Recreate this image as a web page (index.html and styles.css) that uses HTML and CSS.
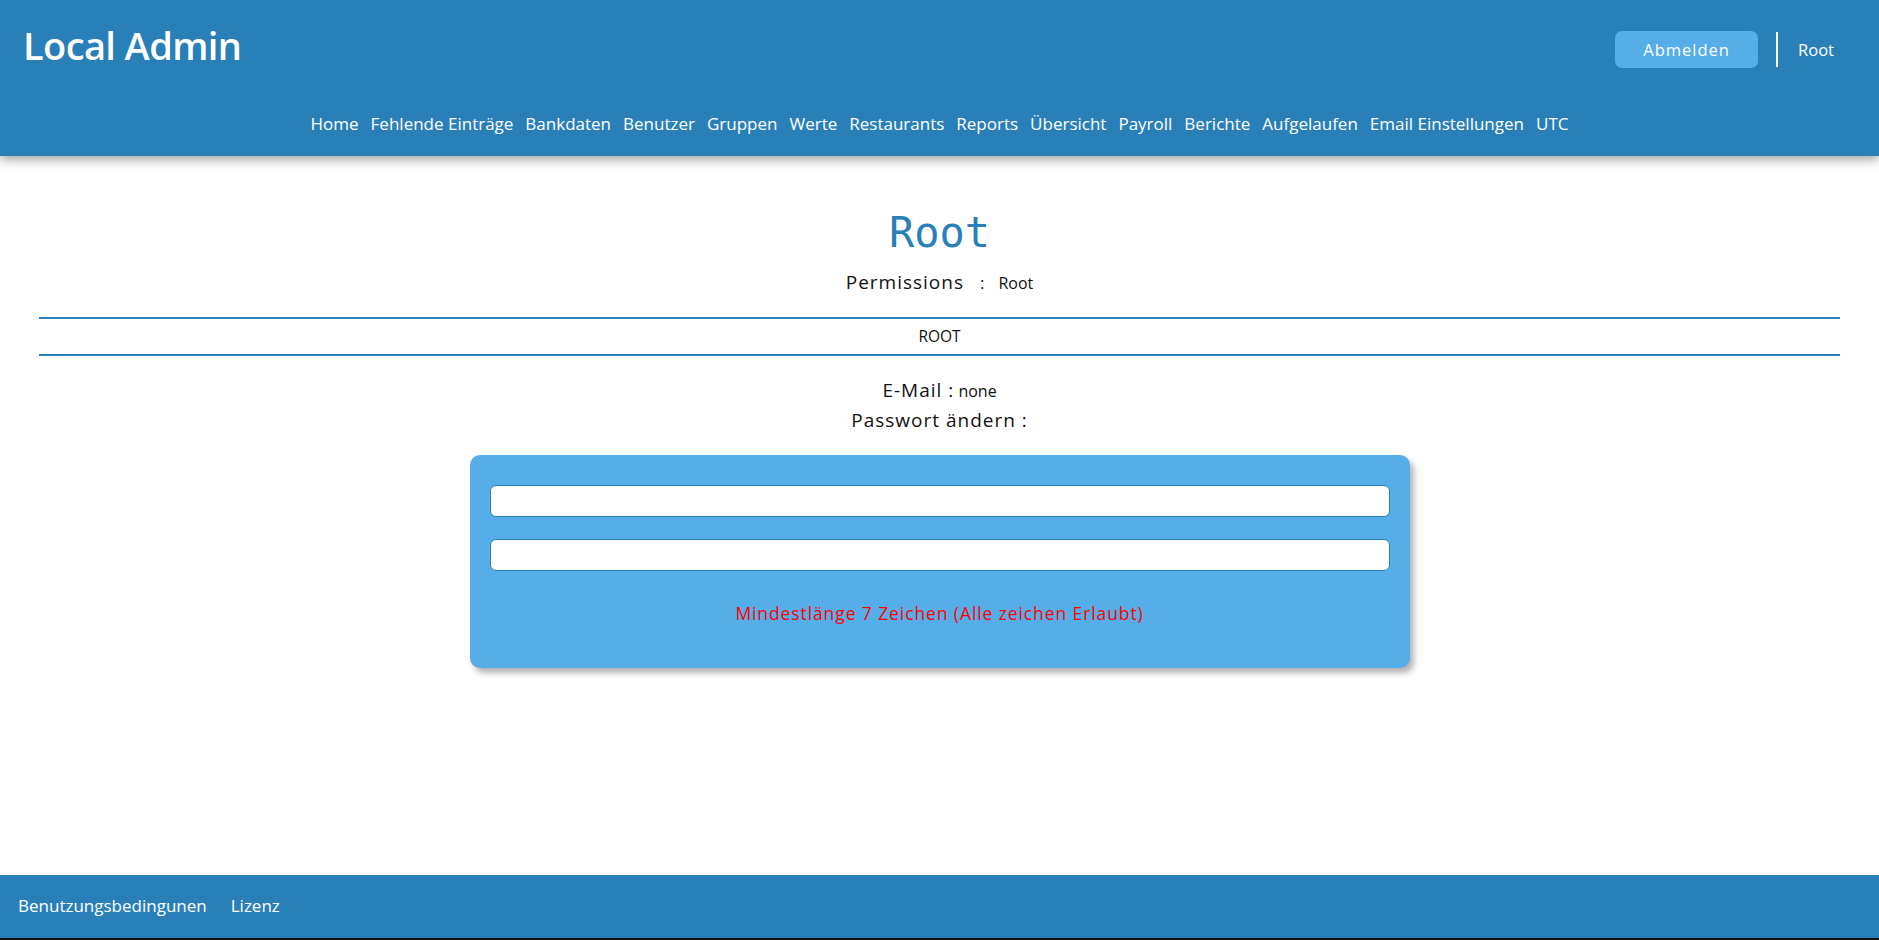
FILE: index.html
```html
<!DOCTYPE html>
<html lang="de">
<head>
<meta charset="utf-8">
<title>Local Admin</title>
<link rel="stylesheet" href="styles.css">
</head>
<body>
<div class="page">
  <header class="topbar">
    <div class="top-row">
      <div class="brand">Local Admin</div>
      <div class="account">
        <button class="logout">Abmelden</button>
        <span class="divider"></span>
        <span class="user">Root</span>
      </div>
    </div>
    <nav class="menu">
      <a>Home</a>
      <a>Fehlende Einträge</a>
      <a>Bankdaten</a>
      <a>Benutzer</a>
      <a>Gruppen</a>
      <a>Werte</a>
      <a>Restaurants</a>
      <a>Reports</a>
      <a>Übersicht</a>
      <a>Payroll</a>
      <a>Berichte</a>
      <a>Aufgelaufen</a>
      <a>Email Einstellungen</a>
      <a>UTC</a>
    </nav>
  </header>

  <main class="content">
    <h1 class="title">Root</h1>
    <div class="perm">
      <span class="perm-label">Permissions</span>
      <span class="perm-colon">:</span>
      <span class="perm-value">Root</span>
    </div>
    <div class="group-band">ROOT</div>
    <div class="info">
      <div class="info-line"><span class="info-label">E-Mail :</span> <span class="info-value">none</span></div>
      <div class="info-line"><span class="info-label">Passwort ändern :</span></div>
    </div>
    <form class="pw-box">
      <input class="pw-input" type="password">
      <input class="pw-input" type="password">
      <p class="pw-hint">Mindestlänge 7 Zeichen (Alle zeichen Erlaubt)</p>
    </form>
  </main>

  <footer class="footer">
    <a>Benutzungsbedingunen</a>
    <a>Lizenz</a>
  </footer>
</div>
</body>
</html>
```

FILE: styles.css
```css
* { box-sizing: border-box; }

html, body {
  margin: 0;
  padding: 0;
  height: 100%;
}

body {
  font-family: "Open Sans", "Noto Sans", sans-serif;
  color: #111;
  background: #fff;
}

.page {
  min-height: 100vh;
  display: flex;
  flex-direction: column;
}

/* Header */
.topbar {
  background: #2980b9;
  color: #fff;
  height: 156px;
  box-shadow: 0 4px 10px rgba(0, 0, 0, 0.35);
  position: relative;
  z-index: 1;
}

.top-row {
  height: 96px;
  display: flex;
  align-items: center;
  justify-content: space-between;
  padding: 0 45px 0 23px;
}

.brand {
  font-size: 38px;
  font-weight: 600;
  letter-spacing: -0.6px;
  margin-top: -6px;
}

.account {
  display: flex;
  align-items: center;
  margin-top: 3px;
}

.logout {
  width: 143px;
  height: 37px;
  border: none;
  border-radius: 7px;
  background: #55aee8;
  color: #fff;
  font-family: inherit;
  font-size: 16.5px;
  letter-spacing: 1px;
  cursor: pointer;
}

.divider {
  width: 2px;
  height: 35px;
  background: #fff;
  margin: 0 20px 0 18px;
}

.user {
  font-size: 16.5px;
}

.menu {
  display: flex;
  justify-content: center;
  gap: 12px;
  padding-top: 16px;
  font-size: 17px;
}

.menu a {
  color: #fff;
  text-decoration: none;
}

/* Content */
.content {
  flex: 1;
  padding: 50px 39px 0;
  text-align: center;
}

.title {
  margin: 0;
  font-family: "DejaVu Sans Mono", monospace;
  font-weight: normal;
  font-size: 42px;
  line-height: 54px;
  color: #2980b9;
}

.perm {
  margin-top: 9px;
  display: flex;
  justify-content: center;
  align-items: baseline;
  line-height: 26px;
}

.perm-label {
  font-size: 19px;
  letter-spacing: 1px;
}

.perm-colon {
  font-size: 17px;
  margin: 0 14px 0 16px;
}

.perm-value {
  font-size: 16px;
}

.group-band {
  margin-top: 21px;
  border-top: 2px solid #2980b9;
  border-bottom: 2px solid #2980b9;
  height: 39px;
  line-height: 35px;
  font-size: 15.5px;
}

.info {
  margin-top: 20px;
  line-height: 29px;
}

.info-label {
  font-size: 19px;
  letter-spacing: 1px;
}

.info-value {
  font-size: 16px;
}

.pw-box {
  width: 940px;
  margin: 19px auto 0;
  background: #55aee8;
  border-radius: 10px;
  box-shadow: 4px 5px 6px rgba(0, 0, 0, 0.3);
  padding: 30px 20px 0;
  height: 213px;
  display: flex;
  flex-direction: column;
  gap: 22px;
}

.pw-input {
  width: 100%;
  height: 32px;
  border: 1px solid #2980b9;
  border-radius: 6px;
  background: #fff;
}

.pw-hint {
  margin: 8px 0 0;
  color: #ff0000;
  font-size: 17.5px;
  letter-spacing: 0.9px;
}

/* Footer */
.footer {
  height: 65px;
  background: #2980b9;
  border-bottom: 2px solid #111;
  display: flex;
  align-items: center;
  gap: 24px;
  padding: 0 18px 2px;
}

.footer a {
  color: #fff;
  font-size: 17px;
  text-decoration: none;
}
```
